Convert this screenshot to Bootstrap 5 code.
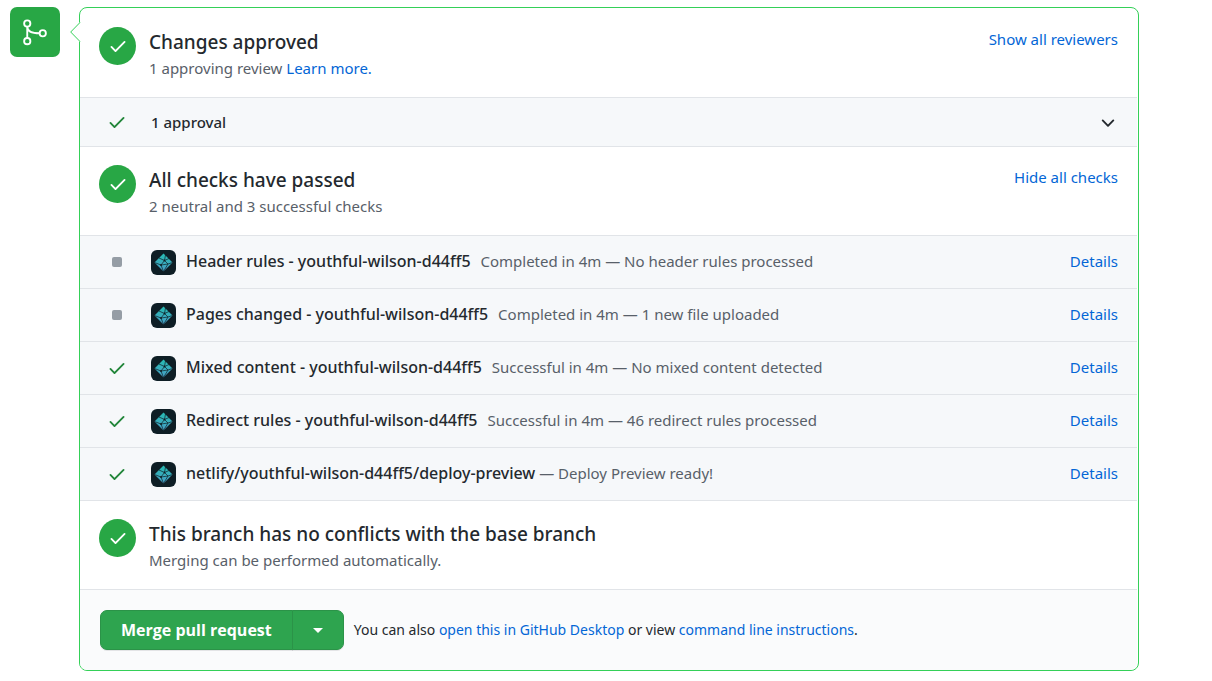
<!DOCTYPE html>
<html lang="en">
<head>
<meta charset="utf-8">
<meta name="viewport" content="width=device-width, initial-scale=1">
<title>Merge pull request</title>
<link href="https://cdn.jsdelivr.net/npm/bootstrap@5.3.0/dist/css/bootstrap.min.css" rel="stylesheet">
<style>
body { font: 15px/24px "Noto Sans", "Open Sans", sans-serif; color: #24292e; }
a { color: #0366d6; text-decoration: none; }
a:hover { text-decoration: underline; }
.merge-page { padding: 7px 73px 10px 10px; gap: 19px; }
.merge-avatar { width: 50px; height: 50px; border-radius: 7px; background: #28a745; }
.merge-box { border: 1px solid #34d058; border-radius: 8px; padding: 1px 1px 0 0; min-width: 0; }
.merge-caret { position: absolute; left: -10px; top: 14px; }
.status-head { padding: 18px 19px 0 19px; min-height: 89px; border-bottom: 1px solid #e1e4e8; gap: 13px; }
.status-circle { width: 37px; height: 38px; background: #28a745; }
.status-head h2 { font-size: 19px; line-height: 30px; font-weight: 500; margin: 0; }
.status-head p { margin: 0; line-height: 22px; color: #586069; }
.status-row { min-height: 53px; padding: 0 19px 0 27px; background: #f6f8fa; border-bottom: 1px solid #e1e4e8; }
.status-row .check-text, .status-row > a { padding-bottom: 2px; }
.approval-row { min-height: 49px; }
.state-icon { width: 20px; margin-right: 24px; color: #22863a; }
.neutral-dot { width: 10px; height: 10px; border-radius: 2px; background: #959da5; }
.app-icon { margin-right: 10px; }
.check-title { font-size: 16px; font-weight: 500; }
.approval-title { font-weight: 500; }
.check-note { color: #586069; }
.check-gap { margin-left: 6px; }
.plain-button { border: 0; padding: 0; background: none; }
.merge-foot { background: #fafbfc; border-radius: 0 0 7px 7px; padding: 20px; gap: 10px; font-size: 14px; }
.merge-foot .btn { --bs-btn-bg: #2ea44f; --bs-btn-border-color: #2b9348; --bs-btn-color: #fff; --bs-btn-hover-bg: #2c974b; --bs-btn-hover-color: #fff; --bs-btn-font-family: "Open Sans", "Noto Sans", sans-serif; --bs-btn-font-size: 16px; --bs-btn-font-weight: 700; --bs-btn-border-radius: 7px; --bs-btn-line-height: 24px; --bs-btn-padding-x: 20px; --bs-btn-padding-y: 7px; box-shadow: 0 1px 0 rgba(27,31,35,.1); }
</style>
</head>
<body>
<svg width="0" height="0" class="position-absolute" aria-hidden="true">
  <defs>
    <linearGradient id="teal" gradientUnits="userSpaceOnUse" x1="12" y1="3" x2="12" y2="22"><stop offset="0" stop-color="#26bdb2"/><stop offset="1" stop-color="#489cc6"/></linearGradient>
  </defs>
  <symbol id="check" viewBox="0 0 16 16"><path fill="currentColor" d="M13.78 4.22a.75.75 0 010 1.06l-7.25 7.25a.75.75 0 01-1.06 0L2.22 9.28a.75.75 0 011.06-1.06L6 10.94l6.72-6.72a.75.75 0 011.06 0z"/></symbol>
  <symbol id="netlify" viewBox="0 0 25 25">
    <rect width="25" height="25" rx="6" fill="#0e1e25"/>
    <path d="M12.5 3.5L21.5 12.5L12.5 21.5L3.5 12.5z" fill="url(#teal)"/>
    <path d="M8 8l5.500 2.500L18 8.500M13.500 10.500L14.500 5M13.500 10.500L10 15L3.500 12.500M13.500 10.500L17 14l4.500-1.500M10 15l7-1M10 15l2.500 6.500L17 14" fill="none" stroke="#0e1e25" stroke-width=".7"/>
    <circle cx="13.500" cy="10.500" r=".9" fill="#0e1e25"/><circle cx="10" cy="15" r=".9" fill="#0e1e25"/>
  </symbol>
</svg>
<main class="merge-page d-flex align-items-start">
  <div class="merge-avatar flex-shrink-0 d-flex align-items-center justify-content-center">
    <svg width="30" height="30" viewBox="0 0 24 24" fill="none" stroke="#fff" stroke-width="1.500" aria-hidden="true"><circle cx="5.800" cy="5.200" r="2.500"/><circle cx="5.800" cy="19.300" r="2.500"/><circle cx="18.200" cy="13" r="2.500"/><path d="M5.800 7.700v9.100M5.800 7.700c0 3.300 3.200 5.300 9.900 5.300"/></svg>
  </div>
  <div class="merge-box position-relative flex-grow-1">
    <svg class="merge-caret" width="11" height="20" viewBox="0 0 11 20" aria-hidden="true"><path d="M11 0L10 0L.7 10L10 20H11z" fill="#fff"/><path d="M10 .5L.7 10l9.300 9.500" fill="none" stroke="#34d058"/></svg>

    <section class="status-head d-flex align-items-start">
      <div class="status-circle rounded-circle text-white flex-shrink-0 d-flex align-items-center justify-content-center"><svg width="20" height="20"><use href="#check"/></svg></div>
      <div class="flex-grow-1"><h2>Changes approved</h2><p>1 approving review <a href="#">Learn more.</a></p></div>
      <a href="#">Show all reviewers</a>
    </section>
    <div class="status-row approval-row d-flex align-items-center">
      <svg class="state-icon" width="20" height="20"><use href="#check"/></svg>
      <span class="approval-title flex-grow-1">1 approval</span>
      <button type="button" class="plain-button d-flex" aria-label="Expand approvals"><svg width="20" height="20" viewBox="0 0 16 16" fill="#24292e"><path d="M12.78 6.22a.75.75 0 010 1.06l-4.25 4.25a.75.75 0 01-1.06 0L3.22 7.28a.75.75 0 011.06-1.06L8 9.94l3.72-3.72a.75.75 0 011.06 0z"/></svg></button>
    </div>

    <section class="status-head d-flex align-items-start">
      <div class="status-circle rounded-circle text-white flex-shrink-0 d-flex align-items-center justify-content-center"><svg width="20" height="20"><use href="#check"/></svg></div>
      <div class="flex-grow-1"><h2>All checks have passed</h2><p>2 neutral and 3 successful checks</p></div>
      <a href="#">Hide all checks</a>
    </section>
    <div class="status-row d-flex align-items-center">
      <span class="state-icon d-flex justify-content-center"><span class="neutral-dot"></span></span>
      <svg class="app-icon" width="25" height="25"><use href="#netlify"/></svg>
      <span class="check-text flex-grow-1"><strong class="check-title">Header rules - youthful-wilson-d44ff5</strong> <span class="check-note check-gap">Completed in 4m — No header rules processed</span></span>
      <a href="#">Details</a>
    </div>
    <div class="status-row d-flex align-items-center">
      <span class="state-icon d-flex justify-content-center"><span class="neutral-dot"></span></span>
      <svg class="app-icon" width="25" height="25"><use href="#netlify"/></svg>
      <span class="check-text flex-grow-1"><strong class="check-title">Pages changed - youthful-wilson-d44ff5</strong> <span class="check-note check-gap">Completed in 4m — 1 new file uploaded</span></span>
      <a href="#">Details</a>
    </div>
    <div class="status-row d-flex align-items-center">
      <svg class="state-icon" width="20" height="20"><use href="#check"/></svg>
      <svg class="app-icon" width="25" height="25"><use href="#netlify"/></svg>
      <span class="check-text flex-grow-1"><strong class="check-title">Mixed content - youthful-wilson-d44ff5</strong> <span class="check-note check-gap">Successful in 4m — No mixed content detected</span></span>
      <a href="#">Details</a>
    </div>
    <div class="status-row d-flex align-items-center">
      <svg class="state-icon" width="20" height="20"><use href="#check"/></svg>
      <svg class="app-icon" width="25" height="25"><use href="#netlify"/></svg>
      <span class="check-text flex-grow-1"><strong class="check-title">Redirect rules - youthful-wilson-d44ff5</strong> <span class="check-note check-gap">Successful in 4m — 46 redirect rules processed</span></span>
      <a href="#">Details</a>
    </div>
    <div class="status-row d-flex align-items-center">
      <svg class="state-icon" width="20" height="20"><use href="#check"/></svg>
      <svg class="app-icon" width="25" height="25"><use href="#netlify"/></svg>
      <span class="check-text flex-grow-1"><strong class="check-title">netlify/youthful-wilson-d44ff5/deploy-preview</strong> <span class="check-note">— Deploy Preview ready!</span></span>
      <a href="#">Details</a>
    </div>

    <section class="status-head d-flex align-items-start">
      <div class="status-circle rounded-circle text-white flex-shrink-0 d-flex align-items-center justify-content-center"><svg width="20" height="20"><use href="#check"/></svg></div>
      <div class="flex-grow-1"><h2>This branch has no conflicts with the base branch</h2><p>Merging can be performed automatically.</p></div>
    </section>
    <div class="merge-foot d-flex align-items-center">
      <div class="btn-group flex-shrink-0">
        <button type="button" class="btn">Merge pull request</button>
        <button type="button" class="btn d-flex align-items-center" aria-label="Select merge method"><svg width="10" height="5" viewBox="0 0 10 5" fill="#fff"><path d="M0 0h10L5 5z"/></svg></button>
      </div>
      <span>You can also <a href="#">open this in GitHub Desktop</a> or view <a href="#">command line instructions</a>.</span>
    </div>
  </div>
</main>
<script src="https://cdn.jsdelivr.net/npm/bootstrap@5.3.0/dist/js/bootstrap.bundle.min.js"></script>
</body>
</html>
